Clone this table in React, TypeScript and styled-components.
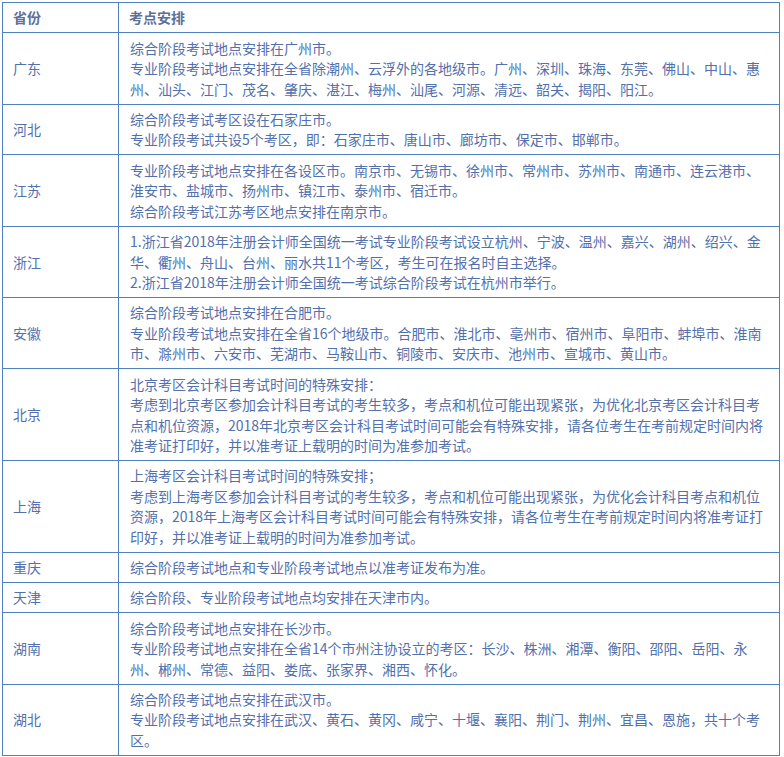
import styled, { createGlobalStyle } from 'styled-components'

const GlobalStyle = createGlobalStyle`
  html, body {
    margin: 0;
    padding: 0;
    background: #ffffff;
  }
  body {
    font-family: "Noto Sans CJK SC", "Microsoft YaHei", sans-serif;
  }
`

const Page = styled.div`
  padding: 2px 0 0 2px;
  width: 778px;
`

const Table = styled.table`
  width: 778px;
  border-collapse: collapse;
  table-layout: fixed;
  font-size: 14px;
  line-height: 20.5px;
  color: #5270ac;
`

const HeadCell = styled.th<{ $w?: number }>`
  width: ${(p) => (p.$w ? `${p.$w}px` : 'auto')};
  box-sizing: border-box;
  border: 1px solid #4f81bd;
  padding: 4.4px 10px;
  text-align: left;
  font-weight: 700;
  color: #5d7099;
`

const ProvinceCell = styled.td`
  border: 1px solid #4f81bd;
  padding: 4.4px 10px;
  vertical-align: middle;
`

const InfoCell = styled.td`
  border: 1px solid #4f81bd;
  padding: 4.4px 11px;
  vertical-align: middle;
`

const Line = styled.span`
  display: block;
  white-space: nowrap;
`

interface Row {
  province: string
  lines: string[]
}

const rows: Row[] = [
  {
    province: '广东',
    lines: [
      '综合阶段考试地点安排在广州市。',
      '专业阶段考试地点安排在全省除潮州、云浮外的各地级市。广州、深圳、珠海、东莞、佛山、中山、惠',
      '州、汕头、江门、茂名、肇庆、湛江、梅州、汕尾、河源、清远、韶关、揭阳、阳江。',
    ],
  },
  {
    province: '河北',
    lines: [
      '综合阶段考试考区设在石家庄市。',
      '专业阶段考试共设5个考区，即：石家庄市、唐山市、廊坊市、保定市、邯郸市。',
    ],
  },
  {
    province: '江苏',
    lines: [
      '专业阶段考试地点安排在各设区市。南京市、无锡市、徐州市、常州市、苏州市、南通市、连云港市、',
      '淮安市、盐城市、扬州市、镇江市、泰州市、宿迁市。',
      '综合阶段考试江苏考区地点安排在南京市。',
    ],
  },
  {
    province: '浙江',
    lines: [
      '1.浙江省2018年注册会计师全国统一考试专业阶段考试设立杭州、宁波、温州、嘉兴、湖州、绍兴、金',
      '华、衢州、舟山、台州、丽水共11个考区，考生可在报名时自主选择。',
      '2.浙江省2018年注册会计师全国统一考试综合阶段考试在杭州市举行。',
    ],
  },
  {
    province: '安徽',
    lines: [
      '综合阶段考试地点安排在合肥市。',
      '专业阶段考试地点安排在全省16个地级市。合肥市、淮北市、亳州市、宿州市、阜阳市、蚌埠市、淮南',
      '市、滁州市、六安市、芜湖市、马鞍山市、铜陵市、安庆市、池州市、宣城市、黄山市。',
    ],
  },
  {
    province: '北京',
    lines: [
      '北京考区会计科目考试时间的特殊安排：',
      '考虑到北京考区参加会计科目考试的考生较多，考点和机位可能出现紧张，为优化北京考区会计科目考',
      '点和机位资源，2018年北京考区会计科目考试时间可能会有特殊安排，请各位考生在考前规定时间内将',
      '准考证打印好，并以准考证上载明的时间为准参加考试。',
    ],
  },
  {
    province: '上海',
    lines: [
      '上海考区会计科目考试时间的特殊安排；',
      '考虑到上海考区参加会计科目考试的考生较多，考点和机位可能出现紧张，为优化会计科目考点和机位',
      '资源，2018年上海考区会计科目考试时间可能会有特殊安排，请各位考生在考前规定时间内将准考证打',
      '印好，并以准考证上载明的时间为准参加考试。',
    ],
  },
  {
    province: '重庆',
    lines: ['综合阶段考试地点和专业阶段考试地点以准考证发布为准。'],
  },
  {
    province: '天津',
    lines: ['综合阶段、专业阶段考试地点均安排在天津市内。'],
  },
  {
    province: '湖南',
    lines: [
      '综合阶段考试地点安排在长沙市。',
      '专业阶段考试地点安排在全省14个市州注协设立的考区：长沙、株洲、湘潭、衡阳、邵阳、岳阳、永',
      '州、郴州、常德、益阳、娄底、张家界、湘西、怀化。',
    ],
  },
  {
    province: '湖北',
    lines: [
      '综合阶段考试地点安排在武汉市。',
      '专业阶段考试地点安排在武汉、黄石、黄冈、咸宁、十堰、襄阳、荆门、荆州、宜昌、恩施，共十个考',
      '区。',
    ],
  },
]

export default function App() {
  return (
    <Page>
      <GlobalStyle />
      <Table>
        <thead>
          <tr>
            <HeadCell $w={116}>省份</HeadCell>
            <HeadCell>考点安排</HeadCell>
          </tr>
        </thead>
        <tbody>
          {rows.map((row) => (
            <tr key={row.province}>
              <ProvinceCell>{row.province}</ProvinceCell>
              <InfoCell>
                {row.lines.map((line, i) => (
                  <Line key={i}>{line}</Line>
                ))}
              </InfoCell>
            </tr>
          ))}
        </tbody>
      </Table>
    </Page>
  )
}
